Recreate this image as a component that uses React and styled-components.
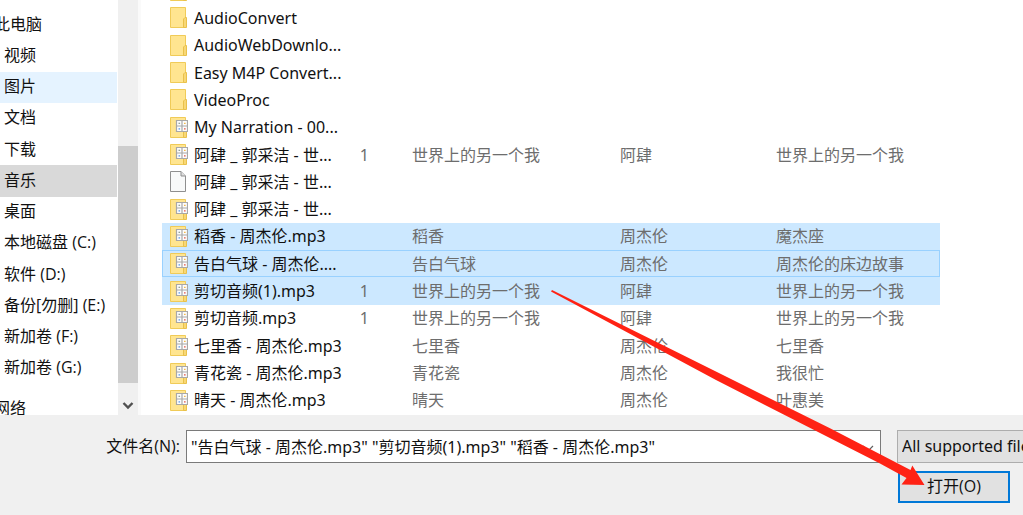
import React from 'react';
import styled, { createGlobalStyle } from 'styled-components';

const GlobalStyle = createGlobalStyle`
  * { box-sizing: border-box; }
  html, body, #root { height: 100%; }
  body {
    margin: 0;
    overflow: hidden;
    background: #f0f0f0;
    color: #111;
    font: 16px/22px "Noto Sans", "Noto Sans CJK SC", sans-serif;
  }
  button, input, select { font: inherit; color: inherit; }
`;

const Dialog = styled.main`
  position: relative;
  display: flex;
  flex-direction: column;
  height: 100%;
  overflow: hidden;
`;

const Browser = styled.div`
  flex: 1;
  min-height: 0;
  display: flex;
  background: #fff;
`;

const Sidebar = styled.nav`
  flex: 0 0 117px;
  display: flex;
  flex-direction: column;
  padding-top: 9px;
  overflow: hidden;
`;

const Places = styled.ul`
  flex: 1;
  display: flex;
  flex-direction: column;
  list-style: none;
  margin: 0;
  padding: 0;
`;

const Place = styled.li`
  flex: 1;
  display: flex;
`;

const PlaceLink = styled.a`
  flex: 1;
  display: flex;
  align-items: center;
  padding: 0 0 2px 4px;
  margin-left: ${(p) => (p.$root ? '-10px' : '0')};
  font-family: "Open Sans", "Noto Sans CJK SC", sans-serif;
  font-size: 16px;
  white-space: pre;
  color: inherit;
  text-decoration: none;
  background: ${(p) => ({ hover: '#e5f3ff', current: '#d9d9d9' })[p.$state] || 'transparent'};
`;

const Network = styled.div`
  flex: 0 0 31px;
  display: flex;
  margin-top: 9px;
  margin-bottom: -9px;
`;

const ScrollTrack = styled.div`
  flex: 0 0 20px;
  margin-left: 1px;
  display: flex;
  flex-direction: column;
  background: #f0f0f0;
`;

const ScrollSpace = styled.div`
  flex: 146;
`;

const ScrollThumb = styled.div`
  flex: 237;
  background: #cdcdcd;
`;

const ScrollDown = styled.button`
  flex: 0 0 32px;
  display: flex;
  align-items: center;
  justify-content: center;
  padding: 12px 0 0;
  border: 0;
  background: none;
`;

const FileList = styled.section`
  flex: 1;
  min-width: 0;
  overflow: hidden;
  border-left: 3px solid #fafafa;
  padding: 0 83px 0 21px;
`;

const FileTable = styled.table`
  width: 100%;
  height: calc(100% + 22px);
  margin-top: -23px;
  table-layout: fixed;
  border-collapse: collapse;
`;

const FileRow = styled.tr`
  background: ${(p) => (p.$selected ? '#cce8ff' : 'transparent')};
  outline: ${(p) => (p.$focused ? '1px solid #99d1ff' : 'none')};
  outline-offset: -1px;
`;

const Cell = styled.td`
  padding: 0;
  font-size: 16px;
  line-height: 22px;
  color: #6d6d6d;
  white-space: nowrap;
  text-align: ${(p) => p.$align || 'left'};
  padding-right: ${(p) => (p.$align ? '43px' : '0')};
`;

const NameCell = styled(Cell)`
  color: #111;
`;

const Name = styled.div`
  display: flex;
  align-items: center;
  gap: 6px;
  padding-left: 8px;
  height: 22px;

  svg { flex: none; }
`;

const Footer = styled.form`
  flex: 0 0 100px;
  display: flex;
  flex-direction: column;
  gap: 8px;
  padding-top: 15px;
  background: #f0f0f0;
`;

const FieldRow = styled.div`
  display: flex;
  align-items: center;
  margin-right: -60px;
`;

const FieldLabel = styled.label`
  flex: 0 0 180px;
  text-align: right;
  font-family: "Open Sans", "Noto Sans CJK SC", sans-serif;
  padding-bottom: 2px;
`;

const Combo = styled.div`
  flex: 1;
  display: flex;
  height: 33px;
  margin: 0 16px 0 6px;
  border: 1px solid #7a7a7a;
  background: #fff;
`;

const ComboInput = styled.input`
  flex: 1;
  min-width: 0;
  padding: 0 0 0 4px;
  border: 0;
  outline: 0;
  background: none;
`;

const ComboButton = styled.button`
  flex: 0 0 24px;
  display: flex;
  align-items: center;
  justify-content: center;
  padding: 4px 0 0;
  border: 0;
  background: none;
`;

const TypeSelect = styled.select`
  flex: 0 0 186px;
  height: 33px;
  padding: 0 4px 2px;
  appearance: none;
  border: 1px solid #adadad;
  border-radius: 0;
  background: #e1e1e1;
`;

const Actions = styled.div`
  display: flex;
  justify-content: flex-end;
  padding-right: 13px;
`;

const OpenButton = styled.button`
  width: 112px;
  height: 32px;
  padding: 0 0 2px;
  border: 2px solid #0078d7;
  background: #e1e1e1;
  font-family: "Open Sans", "Noto Sans CJK SC", sans-serif;
`;

const Pointer = styled.svg`
  position: absolute;
  top: 0;
  left: 0;
  pointer-events: none;
`;

const FolderShape = () => (
  <>
    <path d="M0.5 0.5h15v20h-15z" fill="#ffe590" stroke="#f0cb58" />
    <path d="M13.5 20.5v-8.5l1.5-1.5h1.5v10z" fill="#f8d775" stroke="#e9c14b" />
  </>
);

const icons = {
  folder: (
    <svg width="18" height="21" viewBox="0 0 18 21" aria-hidden="true">
      <FolderShape />
    </svg>
  ),
  media: (
    <svg width="18" height="21" viewBox="0 0 18 21" aria-hidden="true">
      <FolderShape />
      <path d="M6.5 3.5h11v11h-11zM12 3.5v11M6.5 9h11" fill="#fdfdfd" stroke="#a8a8a8" strokeWidth="1.2" />
      <path d="M8.5 5.7h1.6v1.2H8.5z" fill="#8a9a90" />
      <path d="M14 5.7h1.6v1.2H14z" fill="#f2b84b" />
      <path d="M8.5 11.3h1.6v1.2H8.5z" fill="#4f93e8" />
      <path d="M14 11.3h1.6v1.2H14z" fill="#e25548" />
    </svg>
  ),
  file: (
    <svg width="18" height="21" viewBox="0 0 18 21" aria-hidden="true">
      <path d="M0.5 0.5h10.5l4.5 4.5v15.5h-15z" fill="#f8f9f9" stroke="#8f8f8f" />
      <path d="M11 0.5v4.5h4.5" fill="#dedede" stroke="#8f8f8f" />
    </svg>
  ),
};

const Chevron = () => (
  <svg width="12" height="9" viewBox="0 0 12 9" aria-hidden="true">
    <path d="M1.5 2L6 6.5L10.5 2" fill="none" stroke="#505050" strokeWidth="2.4" />
  </svg>
);

const ThinChevron = () => (
  <svg width="12" height="8" viewBox="0 0 12 8" aria-hidden="true">
    <path d="M1 1l5 5 5-5" fill="none" stroke="#606060" strokeWidth="1.2" />
  </svg>
);

const places = [
  { label: '此电脑', root: true },
  { label: '视频' },
  { label: '图片', state: 'hover' },
  { label: '文档' },
  { label: '下载' },
  { label: '音乐', state: 'current' },
  { label: '桌面' },
  { label: '本地磁盘 (C:)' },
  { label: '软件 (D:)' },
  { label: '备份[勿删] (E:)' },
  { label: '新加卷 (F:)' },
  { label: '新加卷 (G:)' },
];

const song = '世界上的另一个我';
const files = [
  { icon: 'folder', name: '' },
  { icon: 'folder', name: 'AudioConvert' },
  { icon: 'folder', name: 'AudioWebDownlo...' },
  { icon: 'folder', name: 'Easy M4P Convert...' },
  { icon: 'folder', name: 'VideoProc' },
  { icon: 'media', name: 'My Narration - 00...' },
  { icon: 'media', name: '阿肆 _ 郭采洁 - 世...', no: 1, title: song, artist: '阿肆', album: song },
  { icon: 'file', name: '阿肆 _ 郭采洁 - 世...' },
  { icon: 'media', name: '阿肆 _ 郭采洁 - 世...' },
  { icon: 'media', name: '稻香 - 周杰伦.mp3', title: '稻香', artist: '周杰伦', album: '魔杰座', selected: true },
  { icon: 'media', name: '告白气球 - 周杰伦....', title: '告白气球', artist: '周杰伦', album: '周杰伦的床边故事', selected: true, focused: true },
  { icon: 'media', name: '剪切音频(1).mp3', no: 1, title: song, artist: '阿肆', album: song, selected: true },
  { icon: 'media', name: '剪切音频.mp3', no: 1, title: song, artist: '阿肆', album: song },
  { icon: 'media', name: '七里香 - 周杰伦.mp3', title: '七里香', artist: '周杰伦', album: '七里香' },
  { icon: 'media', name: '青花瓷 - 周杰伦.mp3', title: '青花瓷', artist: '周杰伦', album: '我很忙' },
  { icon: 'media', name: '晴天 - 周杰伦.mp3', title: '晴天', artist: '周杰伦', album: '叶惠美' },
];

export default function App() {
  return (
    <Dialog>
      <GlobalStyle />
      <Browser>
        <Sidebar>
          <Places>
            {places.map((p) => (
              <Place key={p.label}>
                <PlaceLink href="#" $root={p.root} $state={p.state}>{p.label}</PlaceLink>
              </Place>
            ))}
          </Places>
          <Network>
            <PlaceLink href="#" $root>网络</PlaceLink>
          </Network>
        </Sidebar>
        <ScrollTrack>
          <ScrollSpace />
          <ScrollThumb />
          <ScrollDown type="button" aria-label="向下滚动"><Chevron /></ScrollDown>
        </ScrollTrack>
        <FileList>
          <FileTable>
            <colgroup>
              <col width="180" />
              <col width="70" />
              <col width="208" />
              <col width="156" />
              <col />
            </colgroup>
            <tbody>
              {files.map((f, i) => (
                <FileRow key={i} $selected={f.selected} $focused={f.focused}>
                  <NameCell><Name>{icons[f.icon]}{f.name}</Name></NameCell>
                  <Cell $align="right">{f.no}</Cell>
                  <Cell>{f.title}</Cell>
                  <Cell>{f.artist}</Cell>
                  <Cell>{f.album}</Cell>
                </FileRow>
              ))}
            </tbody>
          </FileTable>
        </FileList>
      </Browser>
      <Footer onSubmit={(e) => e.preventDefault()}>
        <FieldRow>
          <FieldLabel htmlFor="filename">文件名(N):</FieldLabel>
          <Combo>
            <ComboInput
              id="filename"
              defaultValue={'"告白气球 - 周杰伦.mp3" "剪切音频(1).mp3" "稻香 - 周杰伦.mp3"'}
            />
            <ComboButton type="button" aria-label="历史记录"><ThinChevron /></ComboButton>
          </Combo>
          <TypeSelect aria-label="文件类型">
            <option>All supported files</option>
          </TypeSelect>
        </FieldRow>
        <Actions>
          <OpenButton type="submit">打开(O)</OpenButton>
        </Actions>
      </Footer>
      <Pointer width="1023" height="515" viewBox="0 0 1023 515" aria-hidden="true">
        <path
          d="M552 290L733 380L830 428.3L910.5 470L912.3 465.5L924.5 485L901.5 484.5L906.5 478L880 463.5L716 380L551 291.6Z"
          fill="#ff2214"
        />
      </Pointer>
    </Dialog>
  );
}
